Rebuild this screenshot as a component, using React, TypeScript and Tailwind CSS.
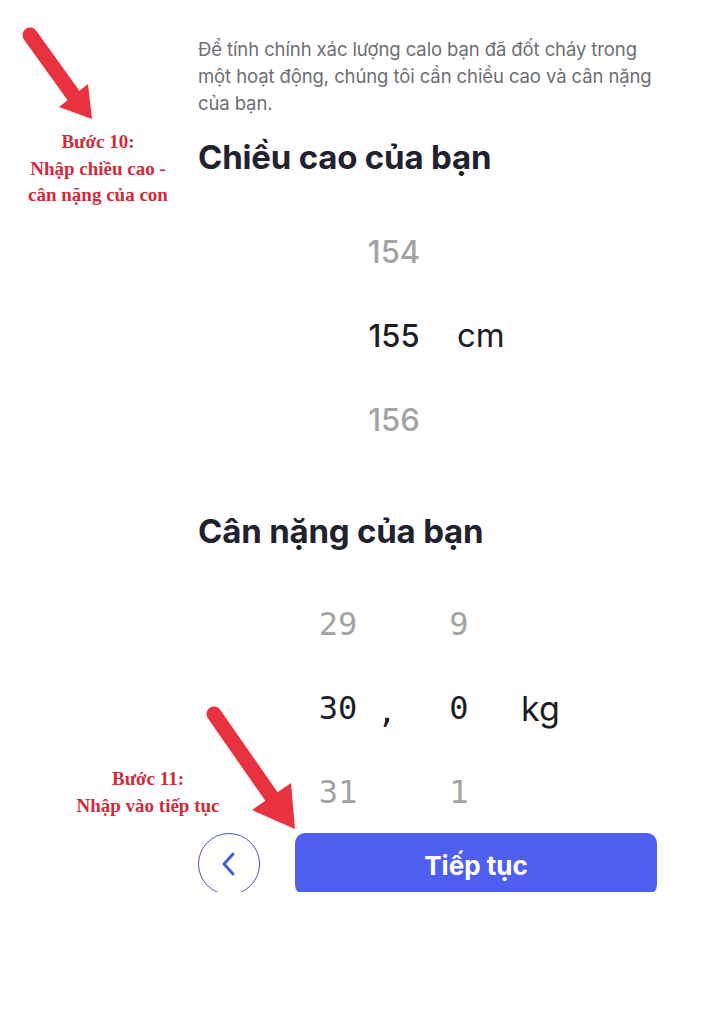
import React from "react";

const sans = { fontFamily: 'Inter, "Noto Sans", sans-serif' };
const mono = { fontFamily: '"DejaVu Sans Mono", "Liberation Mono", monospace' };
const serif = { fontFamily: '"Liberation Serif", "DejaVu Serif", serif' };

function Cell({ children, className = "" }: { children?: React.ReactNode; className?: string }) {
  return <div className={`h-[84px] flex items-center justify-center ${className}`}>{children}</div>;
}

function Arrow({ x1, y1, tip, b1, b2 }: { x1: number; y1: number; tip: [number, number]; b1: [number, number]; b2: [number, number] }) {
  const mx = (b1[0] + b2[0]) / 2;
  const my = (b1[1] + b2[1]) / 2;
  return (
    <g>
      <line x1={x1} y1={y1} x2={mx} y2={my} stroke="#e8323f" strokeWidth={15} strokeLinecap="round" />
      <polygon points={`${tip[0]},${tip[1]} ${b1[0]},${b1[1]} ${b2[0]},${b2[1]}`} fill="#e8323f" />
    </g>
  );
}

export default function App() {
  return (
    <div className="relative w-[720px] h-[1015px] bg-white overflow-hidden" style={sans}>
      <div className="h-[892px] overflow-hidden">
        <div className="ml-[198px] w-[480px] pt-[36px] flex flex-col">
          <p className="text-[18.5px] leading-[27px] text-[#6e6e73] tracking-[-0.1px] w-[470px]">
            Để tính chính xác lượng calo bạn đã đốt cháy trong một hoạt động, chúng tôi cần chiều cao và cân nặng của bạn.
          </p>

          <h2 className="mt-[20px] text-[33px] leading-[40px] font-bold text-[#22222e] tracking-[-0.2px]">
            Chiều cao của bạn
          </h2>

          {/* height wheel */}
          <div className="mt-[33px] flex">
            <div className="ml-[161px] w-[70px] flex flex-col text-[31px] font-medium">
              <Cell className="text-[#a3a3a3]">154</Cell>
              <Cell className="text-[#1d1d26]">155</Cell>
              <Cell className="text-[#a3a3a3]">156</Cell>
            </div>
            <div className="ml-[28px] flex flex-col text-[33px] text-[#1d1d26]">
              <Cell />
              <Cell>cm</Cell>
              <Cell />
            </div>
          </div>

          <h2 className="mt-[49px] text-[33px] leading-[40px] font-bold text-[#22222e] tracking-[-0.2px]">
            Cân nặng của bạn
          </h2>

          {/* weight wheel */}
          <div className="mt-[31px] flex text-[32px]">
            <div className="ml-[115px] w-[50px] flex flex-col" style={mono}>
              <Cell className="text-[#a3a3a3]">29</Cell>
              <Cell className="text-[#1d1d26]">30</Cell>
              <Cell className="text-[#a3a3a3]">31</Cell>
            </div>
            <div className="ml-[14px] w-[20px] flex flex-col text-[#1d1d26]" style={mono}>
              <Cell />
              <Cell className="pt-[8px]">,</Cell>
              <Cell />
            </div>
            <div className="ml-[47px] w-[30px] flex flex-col" style={mono}>
              <Cell className="text-[#a3a3a3]">9</Cell>
              <Cell className="text-[#1d1d26]">0</Cell>
              <Cell className="text-[#a3a3a3]">1</Cell>
            </div>
            <div className="ml-[47px] flex flex-col text-[34px] text-[#1d1d26]">
              <Cell />
              <Cell>kg</Cell>
              <Cell />
            </div>
          </div>

          {/* footer buttons */}
          <div className="mt-[-1px] flex items-start gap-[35px] h-[60px] overflow-hidden">
            <button className="w-[62px] h-[62px] shrink-0 rounded-full border-[1.5px] border-[#4656d2] flex items-center justify-center">
              <svg width="20" height="26" viewBox="0 0 20 26" fill="none">
                <path d="M14 3 L5 13 L14 23" stroke="#4a5ad8" strokeWidth="3" strokeLinecap="round" strokeLinejoin="round" />
              </svg>
            </button>
            <button className="w-[362px] h-[62px] rounded-[10px] bg-[#4e5ff0] text-white text-[26px] font-bold flex items-start justify-center pt-[13px]">
              Tiếp tục
            </button>
          </div>
        </div>
      </div>

      {/* annotations */}
      <svg className="absolute inset-0 pointer-events-none" width="720" height="1015">
        <Arrow x1={30} y1={35} tip={[92, 119]} b1={[59, 107]} b2={[88, 84]} />
        <Arrow x1={214} y1={714} tip={[295, 829]} b1={[252, 810]} b2={[291, 783]} />
      </svg>
      <div
        className="absolute left-[8px] top-[129px] w-[180px] text-center text-[19px] leading-[26.5px] font-bold text-[#cf2b3a]"
        style={serif}
      >
        <div>Bước 10:</div>
        <div>Nhập chiều cao -</div>
        <div>cân nặng của con</div>
      </div>
      <div
        className="absolute left-[58px] top-[766px] w-[180px] text-center text-[19px] leading-[26.5px] font-bold text-[#cf2b3a]"
        style={serif}
      >
        <div>Bước 11:</div>
        <div>Nhập vào tiếp tục</div>
      </div>
    </div>
  );
}
